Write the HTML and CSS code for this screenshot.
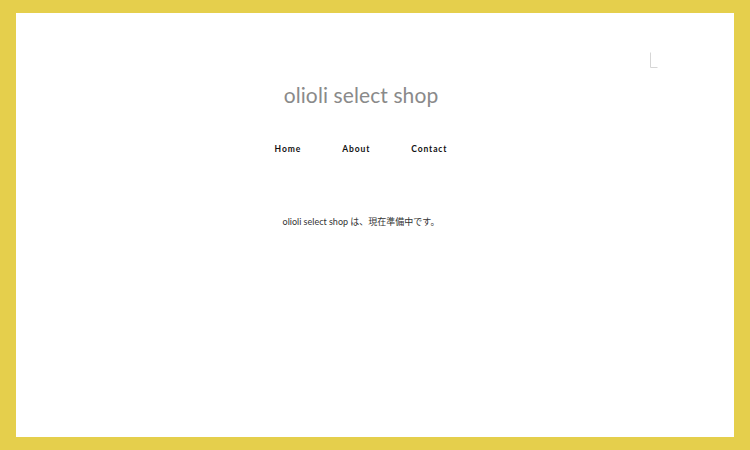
FILE: index.html
```html
<!DOCTYPE html>
<html lang="ja">
<head>
<meta charset="utf-8">
<title>olioli select shop</title>
<link rel="stylesheet" href="styles.css">
</head>
<body>
<div class="frame">
  <div class="page">
    <header class="header">
      <div class="menu-mark">
        <svg width="10" height="18" viewBox="0 0 10 18"><path d="M1.5 1.5 V16.5 H8.5" fill="none" stroke="#d6d6d6" stroke-width="1"/></svg>
      </div>
      <h1 class="site-title">olioli select shop</h1>
      <nav class="nav">
        <a href="#">Home</a>
        <a href="#">About</a>
        <a href="#">Contact</a>
      </nav>
    </header>
    <main class="content">
      <p class="notice">olioli select shop は、現在準備中です。</p>
    </main>
  </div>
</div>
</body>
</html>
```
FILE: styles.css
```css
html, body {
  margin: 0;
  padding: 0;
  height: 100%;
}
body {
  background: #e5cf4c;
  font-family: Lato, "Noto Sans CJK JP", sans-serif;
}
.frame {
  box-sizing: border-box;
  height: 450px;
  padding: 13px 16px;
}
.page {
  background: #fff;
  height: 100%;
}
.header {
  position: relative;
  width: 690px;
  padding-top: 69px;
  display: flex;
  flex-direction: column;
  align-items: center;
}
.menu-mark {
  position: absolute;
  left: 633px;
  top: 38px;
}
.menu-mark svg { display: block; }
.site-title {
  margin: 0;
  font-weight: 400;
  font-size: 21px;
  line-height: 26px;
  color: #8a8a8a;
  letter-spacing: 0.1px;
}
.nav {
  display: flex;
  gap: 41px;
  margin-top: 36px;
}
.nav a {
  color: #111;
  text-decoration: none;
  font-weight: 700;
  font-size: 8.5px;
  letter-spacing: 0.9px;
  line-height: 10px;
}
.content {
  width: 690px;
  display: flex;
  justify-content: center;
  padding-top: 62px;
}
.notice {
  margin: 0;
  font-size: 9px;
  line-height: 12px;
  color: #333;
  letter-spacing: 0;
}
```
